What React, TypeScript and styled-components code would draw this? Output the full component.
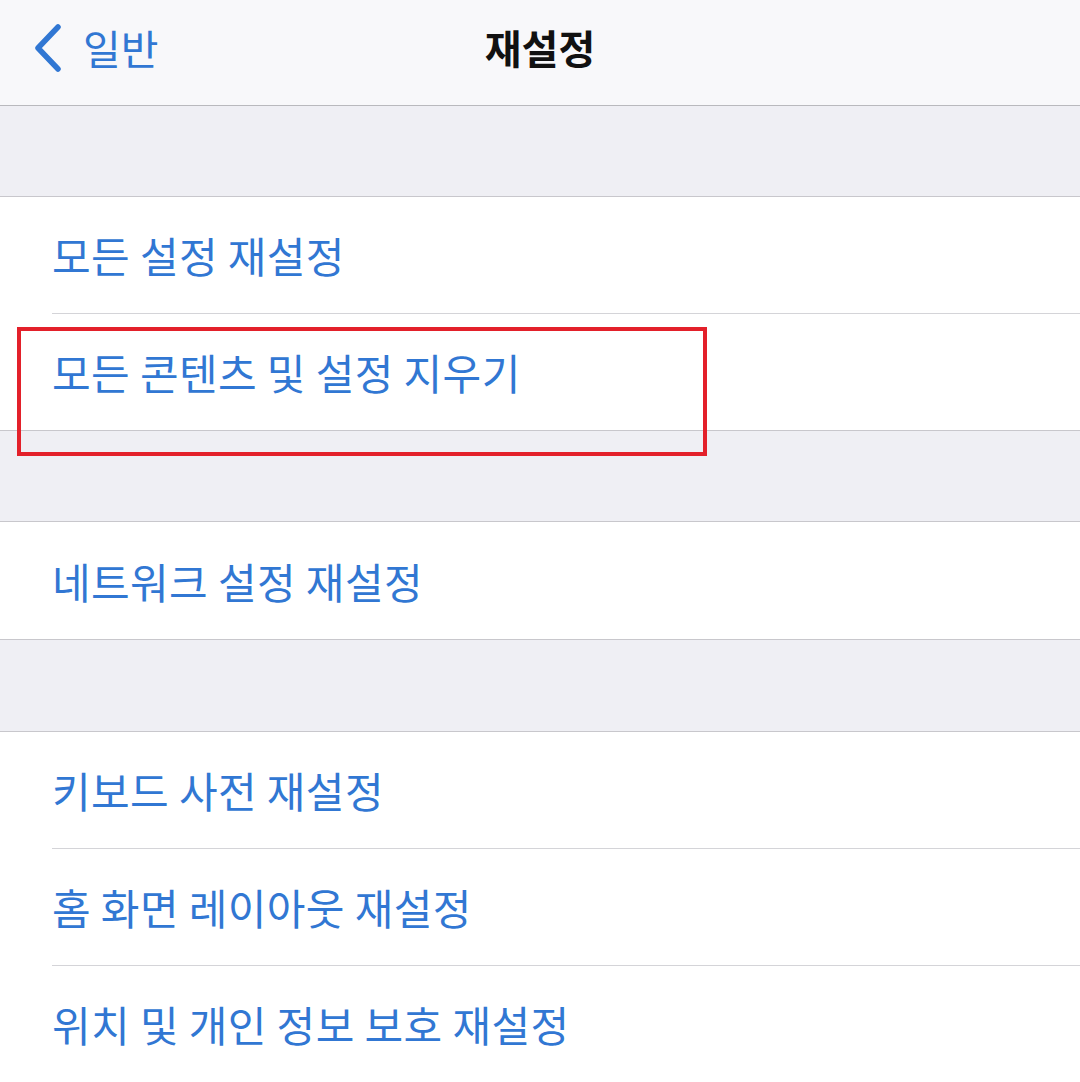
import React from "react";
import styled, { createGlobalStyle } from "styled-components";

const Global = createGlobalStyle`
  html, body { margin: 0; padding: 0; background: #efeff4; }
  body { font-family: "Noto Sans CJK KR", "Noto Sans", sans-serif; }
`;

const Page = styled.div`
  position: relative;
  width: 1080px;
  height: 1082px;
  overflow: hidden;
  background: #efeff4;
  display: flex;
  flex-direction: column;
`;

const NavBar = styled.header`
  height: 105px;
  background: #f8f8fa;
  border-bottom: 1px solid #b9b9bd;
  display: grid;
  grid-template-columns: 1fr auto 1fr;
  align-items: center;
  flex-shrink: 0;
`;

const Back = styled.div`
  display: flex;
  align-items: center;
  gap: 20px;
  padding-left: 33px;
  color: #3177d3;
  font-size: 41px;
  line-height: 1;
  margin-top: -10px;
`;

const Title = styled.h1`
  margin: 0;
  font-size: 40px;
  font-weight: 700;
  color: #111;
  margin-top: -12px;
`;

const Gap = styled.div<{ h: number }>`
  height: ${(p) => p.h}px;
  flex-shrink: 0;
`;

const Group = styled.section`
  background: #fff;
  border-top: 1px solid #c8c7cc;
  border-bottom: 1px solid #c8c7cc;
  flex-shrink: 0;
`;

const Row = styled.div<{ last?: boolean; tall?: boolean }>`
  margin-left: 52px;
  height: ${(p) => (p.tall ? 117 : 116)}px;
  display: flex;
  align-items: center;
  border-bottom: ${(p) => (p.last ? "none" : "1px solid #d4d4d8")};
  color: #3177d3;
  font-size: 42px;
  line-height: 1;
  letter-spacing: 0.4px;
`;

const Highlight = styled.div`
  position: absolute;
  left: 17px;
  top: 327px;
  width: 690px;
  height: 129px;
  border: 4px solid #e3202a;
  box-sizing: border-box;
  pointer-events: none;
`;

const Chevron = () => (
  <svg width="30" height="48" viewBox="0 0 30 48" fill="none">
    <path
      d="M25 3 L5 24 L25 45"
      stroke="#3177d3"
      strokeWidth="5.5"
      strokeLinecap="round"
      strokeLinejoin="round"
    />
  </svg>
);

export default function App() {
  return (
    <>
      <Global />
      <Page>
        <NavBar>
          <Back>
            <Chevron />
            <span>일반</span>
          </Back>
          <Title>재설정</Title>
          <div />
        </NavBar>
        <Gap h={90} />
        <Group>
          <Row>모든 설정 재설정</Row>
          <Row last>모든 콘텐츠 및 설정 지우기</Row>
        </Group>
        <Gap h={90} />
        <Group>
          <Row last tall>네트워크 설정 재설정</Row>
        </Group>
        <Gap h={91} />
        <Group>
          <Row>키보드 사전 재설정</Row>
          <Row>홈 화면 레이아웃 재설정</Row>
          <Row last>위치 및 개인 정보 보호 재설정</Row>
        </Group>
        <Highlight />
      </Page>
    </>
  );
}
